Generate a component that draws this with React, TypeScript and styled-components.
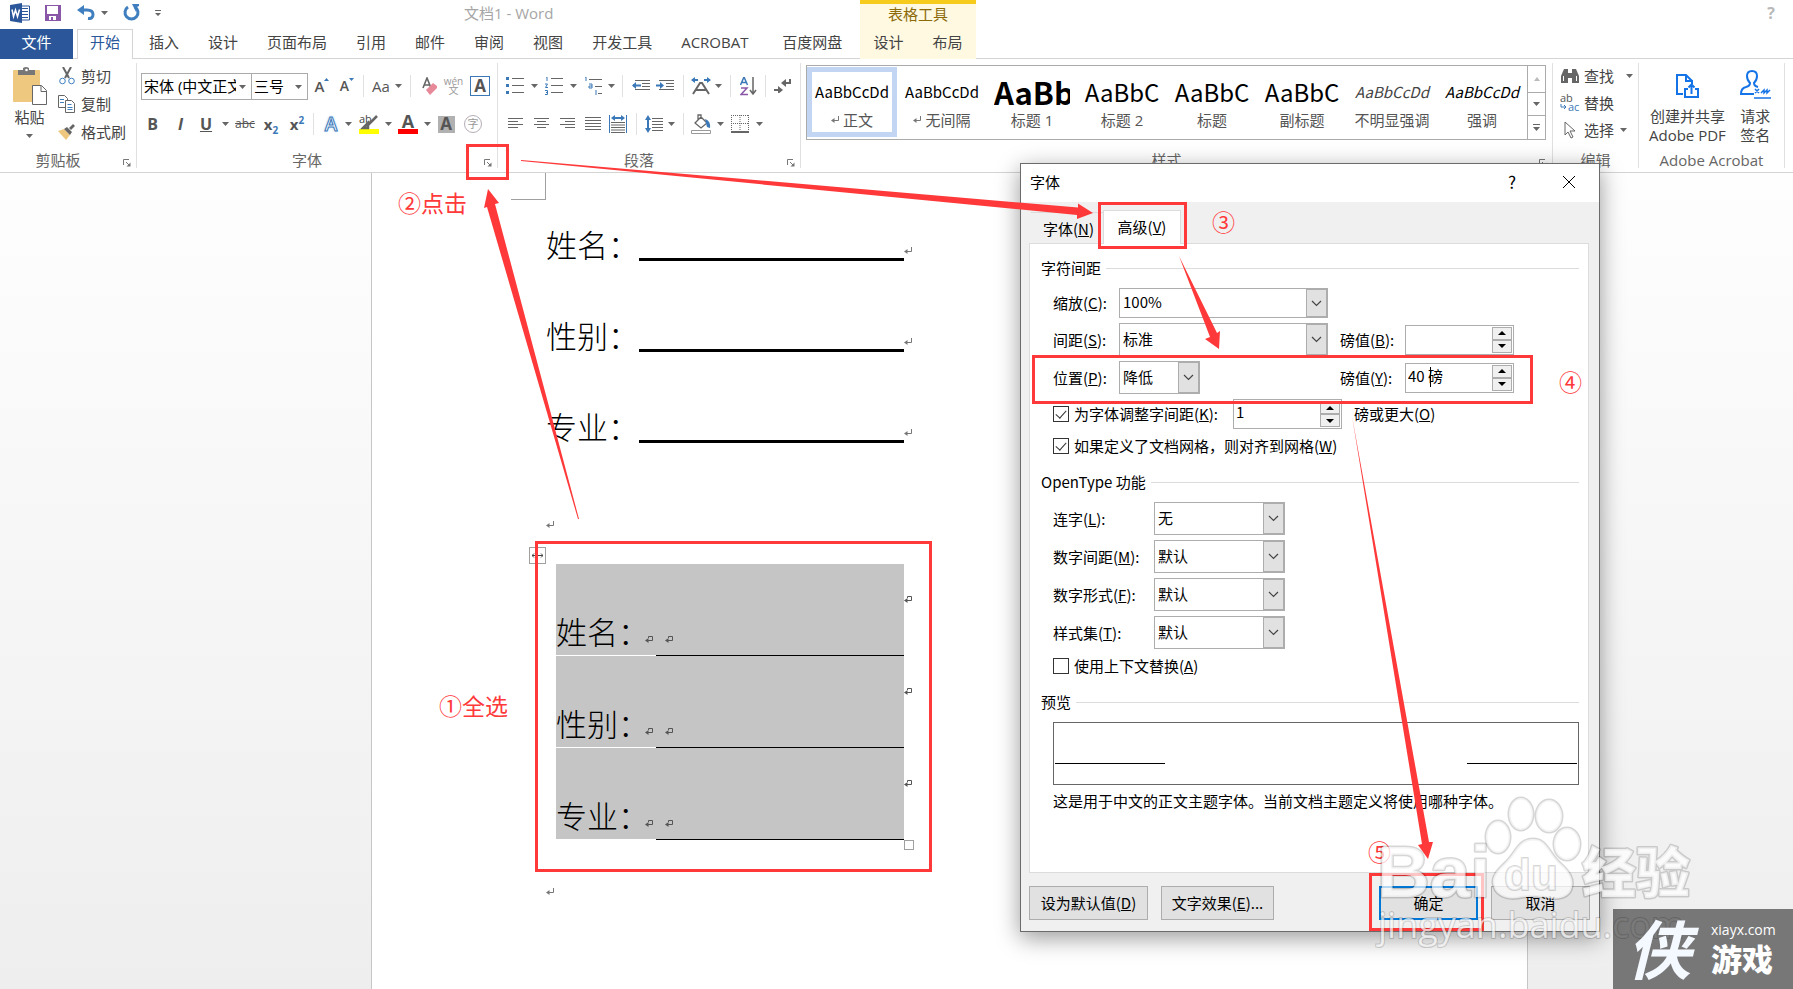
import React from "react";
import styled, { createGlobalStyle, css } from "styled-components";

const ui = `"Open Sans", "Noto Sans CJK SC", sans-serif`;
const red = "#ff3939";
const line = "#d4d4d4";

const Global = createGlobalStyle`
  * { box-sizing: border-box; }
  body { margin: 0; font-family: ${ui}; font-size: 15px; line-height: 20px; color: #444; background: #fff; }
  button, select, input { font: inherit; color: inherit; margin: 0; border-radius: 0; outline: none; }
  button { background: none; border: 0; padding: 0; white-space: nowrap; }
  a { color: inherit; text-decoration: none; }
  svg { display: block; flex: none; }
`;

const App = styled.div`
  position: relative;
  min-height: 100vh;
  display: flex;
  flex-direction: column;
  overflow: hidden;
`;

/* ---------- title bar and tabs ---------- */
const Header = styled.header`
  display: grid;
  grid-template-columns: 860px 116px 1fr;
  border-bottom: 1px solid ${line};
  height: 59px;
`;
const HeaderMain = styled.div`
  display: flex;
  flex-direction: column;
`;
const TitleBar = styled.div`
  display: flex;
  align-items: center;
  height: 29px;
  padding: 0 0 4px 8px;
`;
const QuickAccess = styled.div`
  display: flex;
  align-items: center;
  width: 456px;
`;
const Title = styled.div`
  color: #a6a6a6;
`;
const TabBar = styled.nav`
  display: flex;
  height: 30px;
  gap: 29px;
  line-height: 27px;
  white-space: nowrap;
`;
const FileTab = styled.a`
  background: #2b579a;
  color: #fff;
  width: 73px;
  text-align: center;
  margin-right: -25px;
`;
const Tab = styled.a<{ $active?: boolean; $w?: number }>`
  ${(p) => p.$w && css`width: ${p.$w}px;`}
  ${(p) =>
    p.$active &&
    css`
      color: #2b579a;
      border: 1px solid ${line};
      border-bottom: 0;
      background: #fff;
      padding: 0 12px;
      margin-right: -13px;
      line-height: 25px;
    `}
`;
const Contextual = styled.div`
  background: #fff9e2;
  border-top: 4px solid #f6cb1c;
  text-align: center;
  color: #8c6a08;
`;
const ContextTabs = styled.div`
  display: flex;
  justify-content: center;
  gap: 29px;
  color: #444;
  padding-top: 8px;
`;
const Help = styled.button`
  justify-self: end;
  align-self: start;
  color: #b9b9b9;
  font-weight: 700;
  font-size: 16px;
  padding: 3px 18px;
`;

/* ---------- ribbon ---------- */
const Ribbon = styled.section`
  display: flex;
  height: 114px;
  border-bottom: 1px solid ${line};
  padding: 4px 8px 4px 0;
`;
const GroupBox = styled.div<{ $w?: number }>`
  ${(p) => (p.$w ? `width: ${p.$w}px; flex: none;` : "flex: 1; min-width: 0;")}
  border-right: 1px solid #e1e1e1;
  display: flex;
  flex-direction: column;
`;
const GroupContent = styled.div`
  flex: 1;
  display: flex;
`;
const GroupFooter = styled.div<{ $launcher: boolean }>`
  display: grid;
  grid-template-columns: ${(p) => (p.$launcher ? "1fr 20px" : "1fr")};
  height: 18px;
  padding-bottom: 1px;
  align-items: center;
  text-align: center;
  color: #666;
  white-space: nowrap;
`;
const Launcher = styled.button`
  padding: 6px 0 0 7px;
`;
const Rows = styled.div`
  padding: 4px 0 0 4px;
`;
const EditCommands = styled.div`
  padding-left: 8px;
`;
const ToolRow = styled.div`
  display: flex;
  align-items: center;
  height: 38px;
`;
const Tool = styled.button<{ $w: number }>`
  width: ${(p) => p.$w}px;
  display: flex;
  justify-content: center;
  align-items: center;
  flex: none;
`;
const Sep = styled.i`
  width: 1px;
  height: 22px;
  margin: 0 6px;
  background: #e1e1e1;
`;
const Glyph = styled.span<{ $size: number; $italic?: boolean; $under?: boolean; $strike?: boolean; $weight?: number }>`
  font-size: ${(p) => p.$size}px;
  font-weight: ${(p) => p.$weight ?? 700};
  font-style: ${(p) => (p.$italic ? "italic" : "normal")};
  text-decoration: ${(p) => (p.$under ? "underline" : p.$strike ? "line-through" : "none")};
  color: #555;
  sub, sup { font-size: 10px; line-height: 8px; color: #3b78b8; }
`;
const BoxedA = styled.span<{ $fill?: boolean }>`
  width: ${(p) => (p.$fill ? 17 : 20)}px;
  height: ${(p) => (p.$fill ? 17 : 20)}px;
  line-height: ${(p) => (p.$fill ? 16 : 18)}px;
  font-weight: 700;
  font-size: 17px;
  color: #555;
  background: ${(p) => (p.$fill ? "#b1b1b1" : "#fff")};
  border: ${(p) => (p.$fill ? "0" : "1px solid #3b78b8")};
`;
const BarGlyph = styled.span<{ $bar: string }>`
  width: 20px;
  height: 20px;
  font-size: 18px;
  font-weight: 700;
  line-height: 14px;
  color: #555;
  border-bottom: 5px solid ${(p) => p.$bar};
`;
const Circled = styled.span`
  width: 18px;
  height: 18px;
  border: 1px solid #b5aeb5;
  border-radius: 50%;
  font-size: 11px;
  line-height: 16px;
  color: #999;
`;
const Phonetic = styled.span`
  font-size: 10px;
  line-height: 9px;
  color: #999;
  display: flex;
  flex-direction: column;
  align-items: center;
`;
const OutlineA = styled.span`
  font-size: 19px;
  font-weight: 600;
  color: #fff;
  -webkit-text-stroke: 1px #3b78b8;
  text-shadow: 0 0 3px #8fc0f0;
`;

const PasteButton = styled.button`
  width: 58px;
  padding: 4px 0 4px 1px;
  display: flex;
  flex-direction: column;
  align-items: center;
  gap: 5px;
`;
const PasteLabel = styled.span`
  line-height: 14px;
  padding-bottom: 5px;
`;
const CommandList = styled.div<{ $pitch: number }>`
  display: flex;
  flex-direction: column;
  button { height: ${(p) => p.$pitch}px; }
`;
const Command = styled.button`
  display: flex;
  align-items: center;
  gap: 6px;
  padding-bottom: 2px;
`;
const IconSlot = styled.span`
  width: 17px;
  display: flex;
  justify-content: center;
`;
const GapSpan = styled.span`
  padding-left: 6px;
`;

const RibbonCombo = styled.span<{ $w: number }>`
  position: relative;
  width: ${(p) => p.$w}px;
  height: 27px;
  border: 1px solid #ababab;
  margin-right: -1px;
  select {
    appearance: none;
    border: 0;
    background: none;
    width: 100%;
    height: 25px;
    padding: 0 15px 0 2px;
    color: #000;
    line-height: 24px;
  }
  svg { position: absolute; right: 5px; top: 11px; pointer-events: none; }
`;

const Gallery = styled.div`
  flex: 1;
  margin: 2px 6px 0 5px;
  height: 75px;
  border: 1px solid #ababab;
  display: flex;
  overflow: hidden;
`;
const StyleItem = styled.button<{ $active?: boolean }>`
  width: 90px;
  height: 70px;
  margin-top: 1px;
  border: 5px solid ${(p) => (p.$active ? "#c2d5f2" : "transparent")};
  display: flex;
  flex-direction: column;
  align-items: center;
  color: #555;
`;
const Sample = styled.span<{ $size: number; $bold?: boolean; $italic?: boolean; $soft?: boolean }>`
  font-size: ${(p) => p.$size}px;
  font-weight: ${(p) => (p.$bold ? 700 : 400)};
  font-style: ${(p) => (p.$italic ? "italic" : "normal")};
  color: ${(p) => (p.$soft ? "#444" : "#000")};
  font-family: "Noto Sans CJK SC", sans-serif;
  width: 76px;
  overflow: ${(p) => (p.$bold ? "hidden" : "visible")};
  height: 38px;
  line-height: 40px;
`;
const StyleName = styled.span`
  display: flex;
  align-items: center;
  gap: 4px;
  white-space: nowrap;
`;
const GalleryScroll = styled.div`
  margin-left: auto;
  width: 18px;
  border-left: 1px solid #ababab;
  display: grid;
  grid-template-rows: 26px 23px 1fr;
  button { display: flex; align-items: center; justify-content: center; }
  button + button { border-top: 1px solid #ababab; }
`;
const AcrobatButtons = styled.div`
  display: flex;
  padding-left: 10px;
  gap: 14px;
`;
const BigButton = styled.button`
  display: flex;
  flex-direction: column;
  align-items: center;
  justify-content: flex-end;
  line-height: 19px;
  padding-bottom: 5px;
  gap: 8px;
`;

/* ---------- document ---------- */
const Canvas = styled.main`
  flex: 1;
  display: grid;
  grid-template-columns: 371px 1fr 265px;
  background: linear-gradient(#fefefe, #eee);
`;
const Page = styled.article`
  grid-column: 2;
  background: #fff;
  border: solid #c6c6c6;
  border-width: 0 1px;
  color: #000;
`;
const Corner = styled.div`
  width: 35px;
  height: 27px;
  margin-left: 139px;
  border: solid #a0a0a0;
  border-width: 0 1px 1px 0;
`;
const FieldLine = styled.div`
  display: flex;
  align-items: center;
  height: 91px;
  padding: 0 0 2px 174px;
  svg { margin-top: 12px; }
`;
const DocText = styled.span<{ $w: number }>`
  display: inline-block;
  width: ${(p) => p.$w}px;
  font-family: "Noto Sans CJK SC", sans-serif;
  font-weight: 300;
  font-size: 31px;
  line-height: 30px;
  padding-bottom: 2px;
  white-space: nowrap;
`;
const Rule = styled.span`
  width: 265px;
  height: 33px;
  border-bottom: 3px solid #000;
`;
const MarkLine = styled.p`
  margin: 42px 0 0 174px;
  height: 20px;
  display: flex;
  align-items: center;
`;
const TableWrap = styled.div`
  position: relative;
  width: 348px;
  margin: 29px 0 0 184px;
`;
const Table = styled.table`
  width: 364px;
  border-collapse: separate;
  border-spacing: 0;
  table-layout: fixed;
  td { height: 92px; padding: 0 0 7px; vertical-align: bottom; }
  td:nth-child(1) { width: 100px; background: #c5c5c5; border-bottom: 1px solid #fff; }
  td:nth-child(2) { width: 248px; background: #c5c5c5; border-bottom: 1px solid #000; padding: 0 0 11px 9px; }
  td:nth-child(3) { vertical-align: middle; padding: 0 0 20px; }
`;
const CellFlow = styled.div`
  display: flex;
  align-items: flex-end;
  svg { margin-bottom: 4px; }
`;
const MoveHandle = styled.span`
  position: absolute;
  left: -27px;
  top: -17px;
  width: 17px;
  height: 17px;
  border: 1px solid #a0a0a0;
  background: #fff;
  display: grid;
  place-items: center;
`;
const ResizeHandle = styled.span`
  position: absolute;
  left: 348px;
  bottom: -10px;
  width: 10px;
  height: 10px;
  border: 1px solid #a0a0a0;
  background: #fff;
`;

/* ---------- font dialog ---------- */
const Dialog = styled.section`
  position: absolute;
  left: 1020px;
  top: 163px;
  width: 580px;
  border: 1px solid #6b6b6b;
  background: #f0f0f0;
  color: #000;
  box-shadow: 0 6px 22px rgba(0, 0, 0, 0.4);
  font-family: "Noto Sans CJK SC", sans-serif;
`;
const DialogTitle = styled.header`
  background: #fff;
  height: 38px;
  display: flex;
  align-items: center;
  padding: 0 23px 2px 9px;
  gap: 46px;
  h2 { margin: 0 auto 0 0; font: inherit; }
  button { font-size: 17px; }
`;
const DialogTabs = styled.div`
  display: flex;
  height: 41px;
  padding: 0 0 0 10px;
  align-items: flex-end;
`;
const DialogTab = styled.button<{ $active?: boolean }>`
  height: 31px;
  border-top: 1px solid #dcdcdc;
  width: 72px;
  text-align: right;
  padding: 2px 9px 0 0;
  ${(p) =>
    p.$active &&
    css`
      position: relative;
      width: 78px;
      height: 34px;
      margin-bottom: -1px;
      background: #fff;
      border: 1px solid #dcdcdc;
      border-bottom: 0;
      text-align: center;
      padding: 0 0 2px;
    `}
`;
const Panel = styled.div`
  margin: 0 10px 0 8px;
  height: 630px;
  background: #fff;
  border: 1px solid #dcdcdc;
  padding: 14px 9px 0 11px;
  display: flex;
  flex-direction: column;
`;
const Heading = styled.h3`
  margin: 0;
  font: inherit;
  display: flex;
  align-items: center;
  gap: 5px;
  height: 20px;
  &::after { content: ""; flex: 1; height: 1px; background: #dcdcdc; }
`;
const Fields = styled.div`
  display: flex;
  flex-direction: column;
  gap: 5px;
  padding: 10px 0 14px 12px;
`;
const FieldRow = styled.div<{ $wide?: boolean }>`
  display: grid;
  grid-template-columns: ${(p) => (p.$wide ? "101px 131px" : "66px 221px 65px 109px")};
  align-items: center;
  white-space: nowrap;
`;
const CheckRow = styled.div`
  display: flex;
  align-items: center;
  min-height: 24px;
`;
const CheckLabel = styled.label`
  display: flex;
  align-items: center;
  gap: 5px;
  white-space: nowrap;
`;
const KernLabel = styled(CheckLabel)`
  width: 180px;
`;
const KernUnit = styled.label`
  padding-left: 12px;
`;
const Check = styled.input`
  appearance: none;
  width: 16px;
  height: 16px;
  border: 1px solid #333;
  background: #fff;
  display: grid;
  place-items: center;
  &:checked::after {
    content: "";
    width: 5px;
    height: 9px;
    margin-bottom: 3px;
    border: solid #333;
    border-width: 0 1px 1px 0;
    transform: rotate(42deg);
  }
`;
const Combo = styled.span<{ $w: number; $h: number }>`
  position: relative;
  display: block;
  width: ${(p) => p.$w}px;
  height: ${(p) => p.$h}px;
  border: 1px solid #adadad;
  select {
    appearance: none;
    border: 0;
    background: #fff;
    width: 100%;
    height: 100%;
    padding: 0 22px 2px 3px;
  }
`;
const DropFace = styled.span`
  position: absolute;
  right: 0;
  top: 0;
  bottom: 0;
  width: 21px;
  background: #e1e1e1;
  border: 1px solid #adadad;
  display: grid;
  place-items: center;
  pointer-events: none;
`;
const SpinBox = styled.span`
  position: relative;
  width: 109px;
  height: 30px;
  border: 1px solid #adadad;
  display: flex;
  padding: 1px;
  background: #fff;
  input { border: 0; min-width: 0; flex: 1; padding: 0 1px 4px; background: #fff; }
`;
const SpinButtons = styled.span`
  display: grid;
  grid-template-rows: 1fr 1fr;
  width: 20px;
  button {
    border: 1px solid #adadad;
    background: #f0f0f0;
    display: grid;
    place-items: center;
  }
`;
const TextCursor = styled.i`
  position: absolute;
  left: 24px;
  top: 3px;
  width: 1px;
  height: 20px;
  background: #000;
`;
const Preview = styled.div`
  height: 63px;
  margin: 10px 0 6px 12px;
  border: 1px solid #666;
  display: flex;
  justify-content: space-between;
  padding: 0 1px;
  i { width: 110px; height: 41px; border-bottom: 1px solid #000; }
`;
const Note = styled.p`
  margin: 0 0 0 12px;
  white-space: nowrap;
`;
const DialogFooter = styled.footer`
  display: flex;
  gap: 13px;
  padding: 13px 9px 11px 8px;
`;
const DialogButton = styled.button<{ $w: number; $primary?: boolean }>`
  width: ${(p) => p.$w}px;
  height: 34px;
  background: #e1e1e1;
  border: ${(p) => (p.$primary ? "2px solid #0078d7" : "1px solid #adadad")};
  ${(p) => p.$primary && "margin-left: auto;"}
`;

/* ---------- annotations over the window ---------- */
const Overlay = styled.svg`
  position: absolute;
  left: 0;
  top: 0;
  pointer-events: none;
`;
const RedBox = styled.div<{ $x: number; $y: number; $w: number; $h: number }>`
  position: absolute;
  left: ${(p) => p.$x}px;
  top: ${(p) => p.$y}px;
  width: ${(p) => p.$w}px;
  height: ${(p) => p.$h}px;
  border: 3px solid ${red};
  pointer-events: none;
`;
const RedNote = styled.span<{ $x: number; $y: number }>`
  position: absolute;
  left: ${(p) => p.$x}px;
  top: ${(p) => p.$y}px;
  color: ${red};
  font-family: "Noto Sans CJK SC", sans-serif;
  font-size: 23px;
  line-height: 24px;
`;
const Watermark = styled.svg`
  position: absolute;
  left: 1370px;
  top: 780px;
  pointer-events: none;
  stroke-linejoin: round;
  paint-order: stroke;
`;
const SiteBadge = styled.div`
  position: absolute;
  right: 0;
  bottom: 0;
  width: 180px;
  height: 80px;
  background: rgba(0, 0, 0, 0.5);
  color: #fff;
  display: flex;
  align-items: center;
  gap: 20px;
  padding-left: 14px;
`;
const BadgeMark = styled.span`
  font-family: "Noto Sans CJK SC", sans-serif;
  font-size: 64px;
  line-height: 66px;
  padding-bottom: 6px;
  font-weight: 700;
  font-style: italic;
  color: #f4f8ff;
`;
const BadgeText = styled.div`
  font-size: 14px;
  line-height: 18px;
  strong { display: block; font-size: 31px; line-height: 38px; font-weight: 900; font-family: "Noto Sans CJK SC", sans-serif; }
`;

/* ---------- drawings ---------- */
const Caret = ({ c = "#666" }: { c?: string }) => (
  <svg width="7" height="4" viewBox="0 0 7 4"><path d="M0 0h7L3.500 4z" fill={c} /></svg>
);
const Chevron = () => (
  <svg width="11" height="7" viewBox="0 0 11 7"><path d="M1 1l4.500 4.500L10 1" fill="none" stroke="#444" strokeWidth="1.200" /></svg>
);
const Ic = ({ w = 20, h = 20, children }: { w?: number; h?: number; children: React.ReactNode }) => (
  <svg width={w} height={h} viewBox={`0 0 ${w} ${h}`} fill="none" stroke="#666" strokeWidth="1">{children}</svg>
);
const Return = () => (
  <svg width="8" height="8" viewBox="0 0 8 8" fill="none" stroke="#777"><path d="M7.500 0v4.500H1" /><path d="M0 4.500L3.500 2v5z" fill="#777" stroke="none" /></svg>
);
const CellMark = () => (
  <svg width="8" height="8" viewBox="0 0 8 8" fill="none" stroke="#555"><path d="M3.500 2V.5h4v4H1" /><path d="M0 4.500L3.500 2v5z" fill="#555" stroke="none" /></svg>
);
const LaunchIcon = () => (
  <svg width="8" height="8" viewBox="0 0 8 8" fill="none" stroke="#777"><path d="M.5 6V.5H6M3 3l4 4" /><path d="M7.500 3.500v4h-4z" fill="#777" stroke="none" /></svg>
);
const lines = (rows: [number, number][], gap = 3, y0 = 0.5) =>
  rows.map(([a, b], i) => <path key={i} d={`M${a} ${y0 + i * gap}H${b}`} />);

function Group({ label, w, launcher = true, children }: { label: string; w?: number; launcher?: boolean; children: React.ReactNode }) {
  return (
    <GroupBox $w={w}>
      <GroupContent>{children}</GroupContent>
      <GroupFooter $launcher={launcher}>
        <span>{label}</span>
        {launcher && <Launcher aria-label={`${label}设置`}><LaunchIcon /></Launcher>}
      </GroupFooter>
    </GroupBox>
  );
}

const DropTool = ({ w }: { w: number }) => <Tool $w={w} aria-label="更多"><Caret /></Tool>;

function ComboBox({ id, w, h, value }: { id: string; w: number; h: number; value: string }) {
  return (
    <Combo $w={w} $h={h}>
      <select id={id}><option>{value}</option></select>
      <DropFace><Chevron /></DropFace>
    </Combo>
  );
}
function Spinner({ id, value, label, cursor }: { id: string; value: string; label?: string; cursor?: boolean }) {
  return (
    <SpinBox>
      <input id={id} type="text" defaultValue={value} aria-label={label} />
      {cursor && <TextCursor />}
      <SpinButtons>
        <button aria-label="增加"><svg width="8" height="4"><path d="M0 4h8L4 0z" /></svg></button>
        <button aria-label="减少"><svg width="8" height="4"><path d="M0 0h8L4 4z" /></svg></button>
      </SpinButtons>
    </SpinBox>
  );
}

const styles = [
  { name: "正文", text: "AaBbCcDd", size: 15, mark: true },
  { name: "无间隔", text: "AaBbCcDd", size: 15, mark: true },
  { name: "标题 1", text: "AaBb", size: 31, bold: true },
  { name: "标题 2", text: "AaBbC", size: 24 },
  { name: "标题", text: "AaBbC", size: 24 },
  { name: "副标题", text: "AaBbC", size: 24 },
  { name: "不明显强调", text: "AaBbCcDd", size: 15, italic: true, soft: true },
  { name: "强调", text: "AaBbCcDd", size: 15, italic: true },
];
const names = ["姓名：", "性别：", "专业："];
const features: [string, string, string, string][] = [
  ["liga", "连字", "L", "无"],
  ["numsp", "数字间距", "M", "默认"],
  ["numform", "数字形式", "F", "默认"],
  ["sset", "样式集", "T", "默认"],
];

function Top() {
  return (
    <Header>
      <HeaderMain>
        <TitleBar>
          <QuickAccess>
            <Tool $w={24} aria-label="Word">
              <svg width="22" height="20" viewBox="0 0 22 20">
                <path d="M12 3h8.500v14H12z" fill="#fff" stroke="#2b579a" />
                <path d="M13 5.500h6M13 8.500h6M13 11.500h6M13 14.500h6" stroke="#2b579a" />
                <path d="M1 2l12-2v20L1 18z" fill="#2b579a" />
                <path d="M3 6.500l1.500 7L6.500 7l2 6.500L10.500 6.500" fill="none" stroke="#fff" strokeWidth="1.500" />
              </svg>
            </Tool>
            <Tool $w={41} aria-label="保存">
              <svg width="16" height="16" viewBox="0 0 16 16"><path d="M0 0h16v16H0z" fill="#8a57a8" /><path d="M2 1h11v8H2zM4 11h7v4H8v-3H6v3H4z" fill="#fff" /></svg>
            </Tool>
            <Tool $w={26} aria-label="撤消">
              <svg width="18" height="15" viewBox="0 0 18 15" fill="none"><path d="M3 5h7q6 0 6 4.500T11 13.500" stroke="#3f7fbf" strokeWidth="3" /><path d="M0 5l7-5v10z" fill="#3f7fbf" /></svg>
            </Tool>
            <DropTool w={10} />
            <Tool $w={44} aria-label="恢复">
              <svg width="17" height="17" viewBox="0 0 17 17" fill="none"><path d="M5 3A6.500 6.500 0 1 0 12 3" stroke="#3f7fbf" strokeWidth="3" /><path d="M9 0h7v2l-2 1-1 5z" fill="#3f7fbf" /></svg>
            </Tool>
            <Tool $w={9} aria-label="自定义">
              <svg width="6" height="6" viewBox="0 0 6 6"><path d="M0 0h6v1H0zM0 3h6L3 6z" fill="#666" /></svg>
            </Tool>
          </QuickAccess>
          <Title>文档1 - Word</Title>
        </TitleBar>
        <TabBar>
          <FileTab href="#file">文件</FileTab>
          <Tab href="#home" $active>开始</Tab>
          {["插入", "设计", "页面布局", "引用", "邮件", "审阅", "视图", "开发工具"].map((t) => (
            <Tab key={t} href="#tab">{t}</Tab>
          ))}
          <Tab href="#acrobat" $w={72}>ACROBAT</Tab>
          <Tab href="#pan">百度网盘</Tab>
        </TabBar>
      </HeaderMain>
      <Contextual>
        表格工具
        <ContextTabs><a href="#td">设计</a><a href="#tl">布局</a></ContextTabs>
      </Contextual>
      <Help>?</Help>
    </Header>
  );
}

function RibbonBar() {
  return (
    <Ribbon>
      <Group label="剪贴板" w={137}>
        <PasteButton>
          <svg width="34" height="38" viewBox="0 0 34 38">
            <rect x="0" y="3" width="27" height="32" rx="1" fill="#edc87e" />
            <path d="M5 3h5V1q3-2 6 0v2h6v5H5z" fill="#777" /><circle cx="13.500" cy="3" r="1.300" fill="#fff" />
            <path d="M19.500 18.500h9l5 5v14h-14z" fill="#fff" stroke="#666" /><path d="M28 18.500v6h5.500" fill="none" stroke="#666" />
          </svg>
          <PasteLabel>粘贴</PasteLabel>
          <Caret />
        </PasteButton>
        <CommandList $pitch={28}>
          <Command><IconSlot>
            <Ic w={16} h={18}><path d="M4 0l6 11M12 0L6 11" stroke="#666" strokeWidth="2" /><circle cx="3.500" cy="14" r="2.800" stroke="#3f7fbf" /><circle cx="12.500" cy="14" r="2.800" stroke="#3f7fbf" /></Ic>
          </IconSlot>剪切</Command>
          <Command><IconSlot>
            <Ic w={17} h={18}><path d="M.5.5h6l3 3v9h-9z" fill="#fff" /><path d="M7.500 5.500h6l3 3v9h-9z" fill="#fff" /><path d="M2 4.500h4M2 7.500h4M9.500 9.500h4M9.500 12.500h5M9.500 14.500h5" stroke="#3f7fbf" /></Ic>
          </IconSlot>复制</Command>
          <Command><IconSlot>
            <Ic w={17} h={16}><path d="M0 7l6-2 6 6-4 5z" fill="#edc87e" stroke="none" /><path d="M6 5l3-2 5 5-2 3zM11 4l4-4 2 2-4 4z" fill="#666" stroke="none" /></Ic>
          </IconSlot>格式刷</Command>
        </CommandList>
      </Group>

      <Group label="字体" w={361}>
        <Rows>
          <ToolRow>
            <RibbonCombo $w={111}><select aria-label="字体"><option>宋体 (中文正文)</option></select><Caret /></RibbonCombo>
            <RibbonCombo $w={57}><select aria-label="字号"><option>三号</option></select><Caret /></RibbonCombo>
            <Tool $w={30} aria-label="增大字号"><Glyph $size={15} $weight={600}>A</Glyph><Ic w={5} h={18}><path d="M0 4h5L2.500 1z" fill="#3b78b8" stroke="none" /></Ic></Tool>
            <Tool $w={20} aria-label="减小字号"><Glyph $size={14} $weight={600}>A</Glyph><Ic w={5} h={18}><path d="M0 1h5L2.500 4z" fill="#3b78b8" stroke="none" /></Ic></Tool>
            <Sep />
            <Tool $w={22} aria-label="更改大小写"><Glyph $size={15} $weight={400}>Aa</Glyph></Tool>
            <DropTool w={12} />
            <Sep />
            <Tool $w={25} aria-label="清除格式">
              <Ic w={16} h={18}><path d="M1 11L5 1l4 10M2.500 8h5" strokeWidth="1.600" /><path d="M4 13l7-7 4 3v2l-7 7z" fill="#e8899a" stroke="none" /></Ic>
            </Tool>
            <Tool $w={23} aria-label="拼音指南"><Phonetic><span>wén</span><span>文</span></Phonetic></Tool>
            <Tool $w={30} aria-label="字符边框"><BoxedA>A</BoxedA></Tool>
          </ToolRow>
          <ToolRow>
            <Tool $w={23}><Glyph $size={16}>B</Glyph></Tool>
            <Tool $w={33}><Glyph $size={16} $italic>I</Glyph></Tool>
            <Tool $w={18}><Glyph $size={16} $under>U</Glyph></Tool>
            <DropTool w={20} />
            <Tool $w={20}><Glyph $size={12} $strike $weight={400}>abc</Glyph></Tool>
            <Tool $w={32}><Glyph $size={15}>x<sub>2</sub></Glyph></Tool>
            <Tool $w={20}><Glyph $size={15}>x<sup>2</sup></Glyph></Tool>
            <Sep />
            <Tool $w={22} aria-label="文本效果"><OutlineA>A</OutlineA></Tool>
            <DropTool w={12} />
            <Tool $w={30} aria-label="突出显示">
              <Ic w={20} h={20}><path d="M0 15h20v5H0z" fill="#ff0" stroke="none" /><text x="0" y="9" fontSize="11" fill="#444" stroke="none">ab</text><path d="M18 2l-9 9M9 9l-5 5h5z" strokeWidth="2.500" /></Ic>
            </Tool>
            <DropTool w={8} />
            <Tool $w={32} aria-label="字体颜色"><BarGlyph $bar="#f00">A</BarGlyph></Tool>
            <DropTool w={6} />
            <Tool $w={32} aria-label="字符底纹"><BoxedA $fill>A</BoxedA></Tool>
            <Tool $w={22} aria-label="带圈字符"><Circled>字</Circled></Tool>
          </ToolRow>
        </Rows>
      </Group>

      <Group label="段落" w={303}>
        <Rows>
          <ToolRow>
            <Tool $w={26} aria-label="项目符号"><Ic w={18} h={18}>{lines([[6, 18], [6, 18], [6, 18]], 7, 1.5)}<path d="M0 1.500h3M0 8.500h3M0 15.500h3" stroke="#3b78b8" strokeWidth="3" /></Ic></Tool>
            <DropTool w={12} />
            <Tool $w={27} aria-label="编号"><Ic w={18} h={18}>{lines([[6, 18], [6, 18], [6, 18]], 7, 1.5)}<path d="M1 0h1v4M0 7h2.500L.5 10.500H3M0 13.500h2.500v4H0M1 15.500h1" stroke="#3b78b8" /></Ic></Tool>
            <DropTool w={12} />
            <Tool $w={28} aria-label="多级列表"><Ic w={18} h={18}><path d="M5 2.500h13M11 9.500h7M14 16.500h4" /><path d="M1 0h1v4M5 7h3v4H5V9h3M12 13v5" stroke="#3b78b8" /></Ic></Tool>
            <DropTool w={9} />
            <Sep />
            <Tool $w={23} aria-label="减少缩进"><Ic w={18} h={12}>{lines([[3, 18], [10, 18], [10, 18], [3, 18]])}<path d="M1 5.500h8" stroke="#3b78b8" strokeWidth="2" /><path d="M0 5.500l4-3.500v7z" fill="#3b78b8" stroke="none" /></Ic></Tool>
            <Tool $w={25} aria-label="增加缩进"><Ic w={18} h={12}>{lines([[3, 18], [10, 18], [10, 18], [3, 18]])}<path d="M0 5.500h6" stroke="#3b78b8" strokeWidth="2" /><path d="M8 5.500L4 2v7z" fill="#3b78b8" stroke="none" /></Ic></Tool>
            <Sep />
            <Tool $w={22} aria-label="中文版式"><Ic w={20} h={18}><path d="M2 17l7-11h2l7 11M5 13h10" strokeWidth="2" /><path d="M1 3h6M13 3h6" stroke="#3b78b8" strokeWidth="2" /><path d="M0 3l4-3v6zM20 3l-4-3v6z" fill="#3b78b8" stroke="none" /></Ic></Tool>
            <DropTool w={12} />
            <Sep />
            <Tool $w={22} aria-label="排序"><Ic w={17} h={19}><path d="M0.500 8L4 0l3.500 8M2 5.500h4" stroke="#3b78b8" strokeWidth="1.500" /><path d="M1 11h6l-6 6.500h7" stroke="#8a57a8" strokeWidth="1.500" /><path d="M13 0v17M10 13l3 4 3-4" strokeWidth="1.500" /></Ic></Tool>
            <Sep />
            <Tool $w={20} aria-label="显示标记"><Ic w={17} h={14}><path d="M16 0v4H9M0 11h7" strokeWidth="2" /><path d="M7 4l5-4v8zM9 11l-5-4v8z" fill="#666" stroke="none" /></Ic></Tool>
          </ToolRow>
          <ToolRow>
            <Tool $w={26} aria-label="左对齐"><Ic w={15} h={12}>{lines([[0, 15], [0, 10], [0, 15], [0, 10]])}</Ic></Tool>
            <Tool $w={26} aria-label="居中"><Ic w={15} h={12}>{lines([[0, 15], [3, 12], [0, 15], [3, 12]])}</Ic></Tool>
            <Tool $w={26} aria-label="右对齐"><Ic w={15} h={12}>{lines([[0, 15], [5, 15], [0, 15], [5, 15]])}</Ic></Tool>
            <Tool $w={26} aria-label="两端对齐"><Ic w={16} h={14}>{lines([[0, 16], [0, 16], [0, 16], [0, 16], [0, 16]])}</Ic></Tool>
            <Tool $w={24} aria-label="分散对齐"><Ic w={18} h={18}><path d="M.5 0v18M17.500 0v18" stroke="#3b78b8" />{lines([[2, 16], [2, 16], [2, 16], [2, 16], [2, 16]], 2.5, 7.5)}<path d="M4 3h10" stroke="#3b78b8" strokeWidth="2" /><path d="M2 3l4-3v6zM16 3l-4-3v6z" fill="#3b78b8" stroke="none" /></Ic></Tool>
            <Sep />
            <Tool $w={22} aria-label="行距"><Ic w={18} h={18}>{lines([[7, 18], [7, 18], [7, 18], [7, 18], [7, 18]], 3, 3.5)}<path d="M3 2v14" stroke="#3b78b8" strokeWidth="2" /><path d="M3 0l3 5H0zM3 18l3-5H0z" fill="#3b78b8" stroke="none" /></Ic></Tool>
            <DropTool w={12} />
            <Sep />
            <Tool $w={22} aria-label="底纹"><Ic w={20} h={20}><path d="M.5 16.500h19v3H.5z" stroke="#999" /><path d="M4 9l6-6 6 6-6 5zM7 6V1h3v4" strokeWidth="1.300" /><path d="M14 5q6 2 5 9l-3-1z" fill="#3b78b8" stroke="none" /></Ic></Tool>
            <DropTool w={16} />
            <Tool $w={24} aria-label="边框"><Ic w={18} h={18}><path d="M0 .5h18M.5 0v17M17.500 0v17M9 0v17M0 8.500h18" strokeDasharray="1 1" /><path d="M0 17h18" strokeWidth="2" /></Ic></Tool>
            <DropTool w={14} />
          </ToolRow>
        </Rows>
      </Group>

      <Group label="样式">
        <Gallery>
          {styles.map((s, i) => (
            <StyleItem key={s.name} $active={i === 0}>
              <Sample $size={s.size} $bold={s.bold} $italic={s.italic} $soft={s.soft}>{s.text}</Sample>
              <StyleName>{s.mark && <Return />}{s.name}</StyleName>
            </StyleItem>
          ))}
          <GalleryScroll>
            <button aria-label="上一行"><svg width="6" height="4"><path d="M0 4h6L3 0z" fill="#bbb" /></svg></button>
            <button aria-label="下一行"><Caret /></button>
            <button aria-label="其他"><svg width="7" height="7"><path d="M0 0h7v1H0zM0 3h7L3.500 7z" fill="#666" /></svg></button>
          </GalleryScroll>
        </Gallery>
      </Group>

      <Group label="编辑" w={86} launcher={false}>
        <EditCommands>
          <CommandList $pitch={27}>
            <Command><IconSlot>
              <Ic w={18} h={16}><path d="M0 15V8l3-7h4v14zM18 15V8l-3-7h-4v14zM7 5h4v5H7z" fill="#666" stroke="none" /><path d="M2.500 8v5M15.500 8v5" stroke="#fff" /></Ic>
            </IconSlot>查找<GapSpan><Caret /></GapSpan></Command>
            <Command><IconSlot>
              <Ic w={20} h={18}><text x="0" y="8" fontSize="11" fill="#555" stroke="none">ab</text><text x="8" y="17" fontSize="11" fill="#3b78b8" stroke="none">ac</text><path d="M1 10v3h5M4 11l2 2-2 2" stroke="#3b78b8" /></Ic>
            </IconSlot>替换</Command>
            <Command><IconSlot>
              <Ic w={12} h={18}><path d="M1 1v13l3-3 3 6 2-1-3-6h5z" fill="#fff" /></Ic>
            </IconSlot>选择<Caret /></Command>
          </CommandList>
        </EditCommands>
      </Group>

      <Group label="Adobe Acrobat" w={146} launcher={false}>
        <AcrobatButtons>
          <BigButton>
            <Ic w={24} h={26}><path d="M8 21H2V2h9l6 6M11 2v6h6v3" stroke="#1473e6" strokeWidth="2" /><path d="M13 16h-3v8h13v-8h-3M16.500 21v-9M13.500 14.500l3-3 3 3" stroke="#1473e6" strokeWidth="2" /></Ic>
            <span>创建并共享<br />Adobe PDF</span>
          </BigButton>
          <BigButton>
            <Ic w={31} h={29}><path d="M14 24H1q0-6 5-7 4-1 4-4-3-3-3-7 0-5 5-5t5 5q0 4-3 7 0 3 4 4" stroke="#1473e6" strokeWidth="2" /><path d="M14 28h17M15 19l4 4M19 19l-4 4M21 23l3-3v3l3-3v3l3-3" stroke="#1473e6" strokeWidth="1.500" /></Ic>
            <span>请求<br />签名</span>
          </BigButton>
        </AcrobatButtons>
      </Group>
    </Ribbon>
  );
}

function FontDialog() {
  return (
    <Dialog role="dialog" aria-label="字体">
      <DialogTitle>
        <h2>字体</h2>
        <button>?</button>
        <button aria-label="关闭"><svg width="14" height="14" stroke="#000"><path d="M1 1l12 12M13 1L1 13" /></svg></button>
      </DialogTitle>
      <DialogTabs>
        <DialogTab>字体(<u>N</u>)</DialogTab>
        <DialogTab $active>高级(<u>V</u>)</DialogTab>
      </DialogTabs>
      <Panel>
        <Heading>字符间距</Heading>
        <Fields>
          <FieldRow>
            <label htmlFor="scale">缩放(<u>C</u>):</label>
            <ComboBox id="scale" w={209} h={30} value="100%" />
          </FieldRow>
          <FieldRow>
            <label htmlFor="spacing">间距(<u>S</u>):</label>
            <ComboBox id="spacing" w={209} h={33} value="标准" />
            <label htmlFor="byB">磅值(<u>B</u>):</label>
            <Spinner id="byB" value="" />
          </FieldRow>
          <FieldRow>
            <label htmlFor="position">位置(<u>P</u>):</label>
            <ComboBox id="position" w={81} h={33} value="降低" />
            <label htmlFor="byY">磅值(<u>Y</u>):</label>
            <Spinner id="byY" value="40 磅" cursor />
          </FieldRow>
          <CheckRow>
            <KernLabel><Check type="checkbox" defaultChecked /><span>为字体调整字间距(<u>K</u>):</span></KernLabel>
            <Spinner id="kern" value="1" label="字间距磅值" />
            <KernUnit htmlFor="kern">磅或更大(<u>O</u>)</KernUnit>
          </CheckRow>
          <CheckRow>
            <CheckLabel><Check type="checkbox" defaultChecked /><span>如果定义了文档网格，则对齐到网格(<u>W</u>)</span></CheckLabel>
          </CheckRow>
        </Fields>
        <Heading>OpenType 功能</Heading>
        <Fields>
          {features.map(([id, name, key, value]) => (
            <FieldRow $wide key={id}>
              <label htmlFor={id}>{name}(<u>{key}</u>):</label>
              <ComboBox id={id} w={131} h={33} value={value} />
            </FieldRow>
          ))}
          <CheckRow>
            <CheckLabel><Check type="checkbox" /><span>使用上下文替换(<u>A</u>)</span></CheckLabel>
          </CheckRow>
        </Fields>
        <Heading>预览</Heading>
        <Preview><i /><i /></Preview>
        <Note>这是用于中文的正文主题字体。当前文档主题定义将使用哪种字体。</Note>
      </Panel>
      <DialogFooter>
        <DialogButton $w={119}>设为默认值(<u>D</u>)</DialogButton>
        <DialogButton $w={113}>文字效果(<u>E</u>)...</DialogButton>
        <DialogButton $w={99} $primary>确定</DialogButton>
        <DialogButton $w={99}>取消</DialogButton>
      </DialogFooter>
    </Dialog>
  );
}

export default function WordWindow() {
  return (
    <App>
      <Global />
      <Top />
      <RibbonBar />
      <Canvas>
        <Page>
          <Corner />
          {names.map((n) => (
            <FieldLine key={n}><DocText $w={93}>{n}</DocText><Rule /><Return /></FieldLine>
          ))}
          <MarkLine><Return /></MarkLine>
          <TableWrap>
            <MoveHandle><svg width="11" height="11" fill="none" stroke="#444"><path d="M0 5.500h11M2 3.500l-2 2 2 2M9 3.500l2 2-2 2M5.500 0v2M5.500 9v2" /></svg></MoveHandle>
            <Table>
              <tbody>
                {names.map((n) => (
                  <tr key={n}>
                    <td><CellFlow><DocText $w={89}>{n}</DocText><CellMark /></CellFlow></td>
                    <td><CellMark /></td>
                    <td><CellMark /></td>
                  </tr>
                ))}
              </tbody>
            </Table>
            <ResizeHandle />
          </TableWrap>
          <MarkLine><Return /></MarkLine>
        </Page>
      </Canvas>

      <FontDialog />

      <RedBox $x={466} $y={144} $w={43} $h={36} />
      <RedBox $x={535} $y={541} $w={397} $h={331} />
      <RedBox $x={1098} $y={202} $w={89} $h={47} />
      <RedBox $x={1032} $y={355} $w={501} $h={49} />
      <RedBox $x={1369} $y={873} $w={115} $h={58} />
      <RedNote $x={439} $y={693}>①全选</RedNote>
      <RedNote $x={398} $y={190}>②点击</RedNote>
      <RedNote $x={1212} $y={209}>③</RedNote>
      <RedNote $x={1559} $y={369}>④</RedNote>
      <RedNote $x={1368} $y={839}>⑤</RedNote>
      <Overlay width="1793" height="989" viewBox="0 0 1793 989" fill={red}>
        <path d="M579 519L495 204l4-1-11-14-4 19 3-1L578 519z" />
        <path d="M521 160L1078 207.500v-4l15 9.500-16 6v-4L521 161z" />
        <path d="M1179 256L1217 333l3-2-1 18-14-10 5-2z" />
        <path d="M1352 416L1429 842h4l-5 17-10-14 4-1z" />
      </Overlay>

      <Watermark width="330" height="180" viewBox="0 0 330 180" fill="#fff" fillOpacity="0.7" stroke="#000" strokeOpacity="0.16" strokeWidth="3">
        <text x="7" y="117" fontSize="73" fontWeight="700" fontFamily="Liberation Sans, sans-serif">Bai</text>
        <ellipse cx="128" cy="57" rx="12" ry="16" />
        <ellipse cx="151" cy="34" rx="12" ry="16" />
        <ellipse cx="179" cy="36" rx="13" ry="16" />
        <ellipse cx="197" cy="64" rx="13" ry="16" />
        <path d="M163 59c14 0 16 14 27 24 9 8 14 15 12 24-2 11-14 13-24 11-9-2-21-2-30 0-12 2-24-3-25-15-1-8 6-14 13-21 10-10 13-23 27-23z" />
        <text x="134" y="110" fontSize="44" fontWeight="700" fontFamily="Liberation Sans, sans-serif" fillOpacity="0.5" strokeWidth="2">du</text>
        <text x="212" y="113" fontSize="54" fontWeight="900" fontFamily="Noto Sans CJK SC, sans-serif">经验</text>
        <text x="8" y="158" fontSize="36" fontFamily="Open Sans, sans-serif" strokeWidth="2">jingyan.baidu.com</text>
      </Watermark>
      <SiteBadge>
        <BadgeMark>侠</BadgeMark>
        <BadgeText>xiayx.com<strong>游戏</strong></BadgeText>
      </SiteBadge>
    </App>
  );
}
